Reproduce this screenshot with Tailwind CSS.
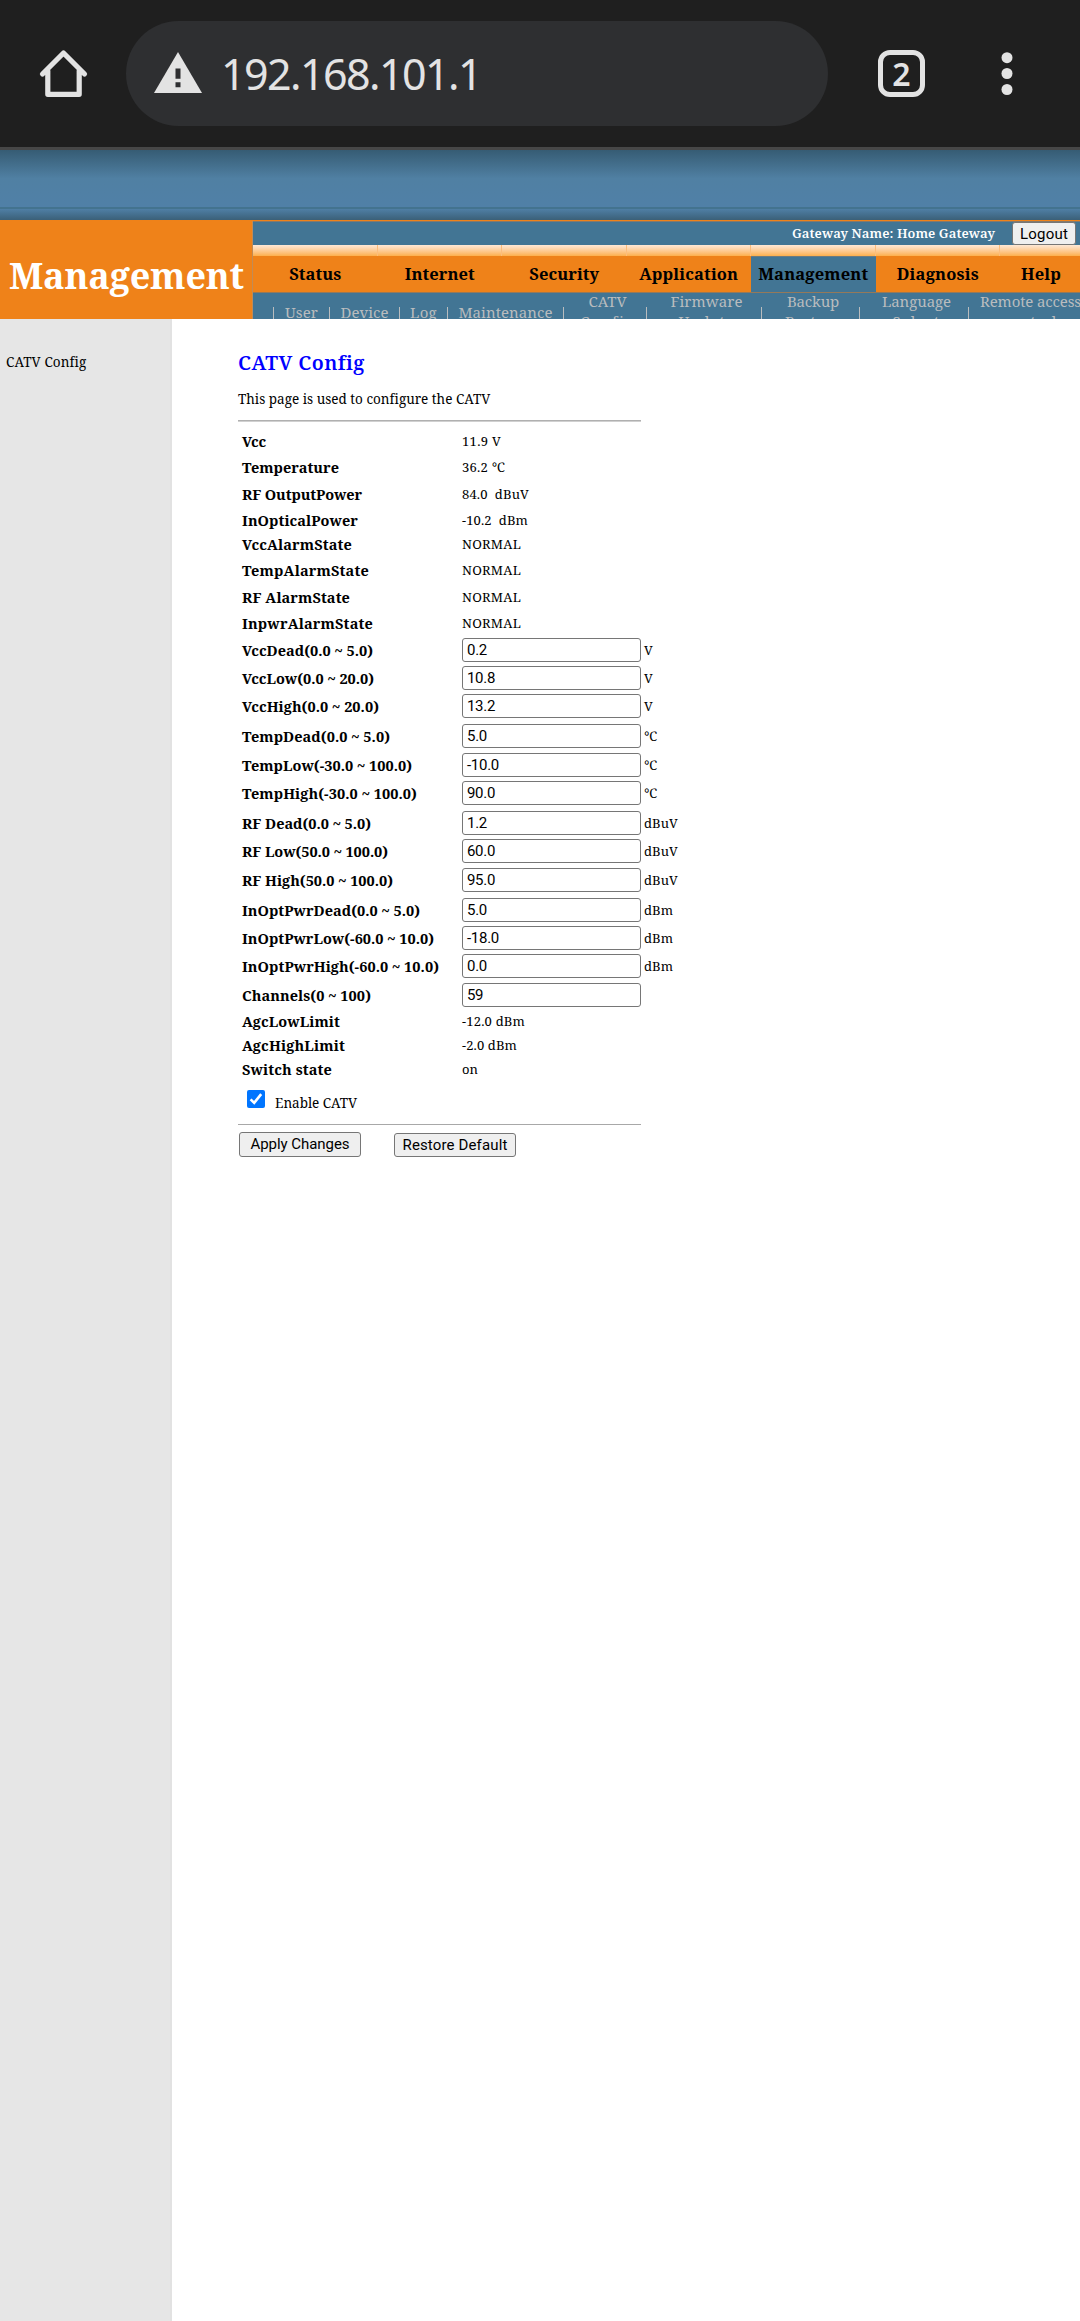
<!DOCTYPE html>
<html lang="en">
<head>
<meta charset="utf-8">
<title>CATV Config</title>
<script src="https://cdn.jsdelivr.net/npm/@tailwindcss/browser@4"></script>
</head>
<body class="w-[1080px] h-[2321px] overflow-hidden bg-white text-black font-['Noto_Serif','DejaVu_Serif',serif]">
<header class="flex h-[150px] items-start border-b-[3px] border-[#474747] bg-[#1f1f1f] text-[#e3e3e3]">
  <svg class="ml-[38px] mt-12 h-[52px] w-[52px] shrink-0" viewBox="0 0 52 52" fill="none" stroke="#e3e3e3" stroke-width="5.2" stroke-linecap="round" stroke-linejoin="round"><path d="M4.5 26 L25.5 5 L46.5 26 M9.800 23 V46.300 H41.200 V23"/></svg>
  <div class="ml-9 mt-[21px] flex h-[105px] w-[702px] items-center rounded-full bg-[#2e2f31]">
    <svg class="ml-7 mb-[3px] h-[41px] w-12 shrink-0" viewBox="0 0 48 42" preserveAspectRatio="none"><path fill="#e3e3e3" d="M24 0 L48 42 H0Z"/><path fill="#2e2f31" d="M21.500 17h5v10.500h-5z M21.500 31h5v5h-5z"/></svg>
    <div class="ml-[19px] whitespace-nowrap font-['Noto_Sans',sans-serif] text-[43px] leading-none"><span data-w="260" data-f="43px 'Noto Sans'">192.168.101.1</span></div>
  </div>
  <div class="ml-[50px] mt-[50px] flex h-[47px] w-[47px] items-center justify-center rounded-[12px] border-[5px] border-[#e3e3e3] font-['Noto_Sans',sans-serif] text-[32px] font-semibold leading-none">2</div>
  <svg class="ml-[75.5px] mt-[50px] h-12 w-3" viewBox="0 0 12 48" fill="#e3e3e3"><circle cx="6" cy="7.700" r="5.500"/><circle cx="6" cy="23.500" r="5.500"/><circle cx="6" cy="39.500" r="5.500"/></svg>
</header>
<div class="h-[57px] bg-linear-to-b from-[#365c74] via-[#5080a3] via-50% to-[#5080a7]"></div>
<div class="h-[13px] border-t-2 border-[#43738f] bg-linear-to-b from-[#4f7fa5] to-[#3b6078]"></div>
<div class="flex h-[99px] border-t border-[#ef8219] bg-[#427594]">
  <div class="w-[253px] shrink-0 border-r border-[#c18b55] bg-[#ef8219] pl-[9px] pt-[33px] text-[36px] font-bold leading-[44px] text-white"><span data-w="235" data-f="bold 36px 'Noto Serif'">Management</span></div>
  <div class="flex h-full w-[827px] flex-col overflow-hidden">
    <div class="flex h-6 shrink-0 border-t border-[#86796a] pl-[539px] text-[13px] font-semibold leading-[22px] text-white">
      <span data-w="203" data-f="600 13px 'Noto Serif'">Gateway Name: Home Gateway</span>
      <button class="ml-[17px] h-[23px] w-16 rounded-[3px] border border-[#767676] bg-[#efefef] font-[Roboto] text-[15px] font-normal leading-[20px] text-black"><span data-w="48" data-f="15px Roboto">Logout</span></button>
    </div>
    <nav id="tabs" class="flex h-12 w-[872px] shrink-0 text-[16.5px] font-bold"></nav>
    <div id="sub" class="flex w-[900px] text-[15px] leading-[20px] text-[#b9bcbe]"></div>
  </div>
</div>
<main class="flex h-[2002px]">
  <aside class="w-[172px] shrink-0 border-r-2 border-[#e2e2e2] bg-[#e6e6e6] pl-[6px] pt-[34px] text-[13.5px] leading-[18px]"><span data-w="80" data-f="13.5px 'Noto Serif'">CATV Config</span></aside>
  <section class="ml-[66px] w-[500px]">
    <h1 class="pt-[30px] text-[20px] font-semibold leading-[28px] text-[#0000ff]"><span data-w="126" data-f="600 20px 'Noto Serif'">CATV Config</span></h1>
    <p class="mt-[13px] text-[13.5px] leading-[18px]"><span data-w="252" data-f="13.5px 'Noto Serif'">This page is used to configure the CATV</span></p>
    <div class="mt-[12px] h-[2px] w-[403px] border-t border-[#b0b0b0] bg-[#d0d0d0]"></div>
    <div id="rows" class="mt-[7px]"></div>
    <div class="mt-[9px] flex">
      <div class="ml-[9px] flex h-[18px] w-[18px] items-center justify-center rounded-[2px] bg-[#0075ff]"><svg class="h-[18px] w-[18px]" viewBox="0 0 18 18" fill="none" stroke="#fff" stroke-width="2.600"><path d="M3.600 9.300 L7.200 12.900 L14.200 4.100"/></svg></div>
      <div class="ml-[10px] mt-1 text-[13.5px] leading-[18px]"><span data-w="82" data-f="13.5px 'Noto Serif'">Enable CATV</span></div>
    </div>
    <div class="mt-[12px] h-px w-[403px] bg-[#a8a8a8]"></div>
    <div class="ml-px mt-[7px] flex items-end gap-[33px] font-[Roboto] text-[15px] leading-none">
      <button class="h-[25px] w-[122px] rounded-[3px] border border-[#767676] bg-[#efefef]"><span data-w="99" data-f="15px Roboto">Apply Changes</span></button>
      <button class="h-6 w-[122px] rounded-[3px] border border-[#767676] bg-[#efefef]"><span data-w="105" data-f="15px Roboto">Restore Default</span></button>
    </div>
  </section>
</main>
<script>
const tabs = [["Status",52],["Internet",70],["Security",70],["Application",99],["Management",110],["Diagnosis",82],["Help",40]];
document.getElementById("tabs").innerHTML = tabs.map(([t,w],i)=>`<div class="flex h-12 w-[124.5px] shrink-0 flex-col"><div class="h-[11px] border-r border-[#fcbd7c] bg-linear-to-b from-[#fde8d6] to-[#fdb04a]"></div><div class="h-[37px] border-b border-[#94795a] ${i===6?"pl-[21px]":"text-center"} ${i===4?"bg-[#427594] border-t border-t-[#6c7a80] leading-[34px]":"bg-[#ef8219] leading-[36px]"}"><span data-w="${w}" data-f="bold 16.5px 'Noto Serif'">${t}</span></div></div>`).join("");
const subs = [["User",33,56],["Device",48,70],["Log",27,48],["Maintenance",94,116],["CATV",38,83,"Config",54],["Firmware",72,115,"Update",56],["Backup",52,98,"Restore",56],["Language",69,109,"Select",48],["Remote access",101,124,"control",52]];
document.getElementById("sub").innerHTML = `<div class="w-[20px] shrink-0"></div>` + subs.map(([t,w,cw,t2,w2],i)=>`<div class="flex shrink-0" style="width:${cw}px"><div class="mt-[14px] h-6 w-px bg-[#b9bcbe]"></div><div class="flex-1 text-center whitespace-nowrap ${t2?"-mt-0.5":"pt-[9px]"} ${t2&&i<8?"pl-[5px]":""}"><span data-w="${w}" data-f="15px 'Noto Serif'">${t}</span>${t2?`<br><span data-w="${w2}" data-f="15px 'Noto Serif'">${t2}</span>`:""}</div></div>`).join("");
const N=59;
const rows = [
["Vcc",24,26,"11.9 V",39],["Temperature",97,27,"36.2 ℃",43],["RF OutputPower",120,26,"84.0\u00a0 dBuV",67],["InOpticalPower",116,24,"-10.2\u00a0 dBm",66],
["VccAlarmState",110,26,"NORMAL",N],["TempAlarmState",127,27,"NORMAL",N],["RF AlarmState",108,26,"NORMAL",N],["InpwrAlarmState",131,27,"NORMAL",N],
["VccDead(0.0 ~ 5.0)",131,28,"0.2",20,"V",8],["VccLow(0.0 ~ 20.0)",132,28,"10.8",28,"V",8],["VccHigh(0.0 ~ 20.0)",137,30,"13.2",28,"V",8],
["TempDead(0.0 ~ 5.0)",148,29,"5.0",20,"℃",12],["TempLow(-30.0 ~ 100.0)",170,28,"-10.0",32,"℃",12],["TempHigh(-30.0 ~ 100.0)",175,30,"90.0",28,"℃",12],
["RF Dead(0.0 ~ 5.0)",129,28,"1.2",20,"dBuV",34],["RF Low(50.0 ~ 100.0)",146,29,"60.0",28,"dBuV",34],["RF High(50.0 ~ 100.0)",151,30,"95.0",28,"dBuV",34],
["InOptPwrDead(0.0 ~ 5.0)",178,28,"5.0",20,"dBm",29],["InOptPwrLow(-60.0 ~ 10.0)",192,28,"-18.0",32,"dBm",29],["InOptPwrHigh(-60.0 ~ 10.0)",197,29,"0.0",20,"dBm",29],
["Channels(0 ~ 100)",129,26,"59",16,"",0],["AgcLowLimit",98,24,"-12.0 dBm",63],["AgcHighLimit",103,24,"-2.0 dBm",55],["Switch state",90,24,"on",16]];
document.getElementById("rows").innerHTML = rows.map(([l,lw,h,v,vw,u,uw])=>`<div class="flex items-start whitespace-nowrap" style="height:${h}px"><div class="w-[221px] shrink-0 pl-[4px] pt-px text-[14.5px] font-bold leading-[22px]"><span data-w="${lw}" data-f="bold 14.5px 'Noto Serif'">${l}</span></div>`+
(u===undefined?`<div class="pl-[3px] pt-px text-[13px] leading-[22px]"><span data-w="${vw}" data-f="13px 'Noto Serif'">${v}</span></div>`
:`<div class="ml-[3px] h-6 w-[179px] shrink-0 rounded-[3px] border border-[#767676] pl-[4px] font-[Roboto] text-[15px] leading-[22px]"><span data-w="${vw}" data-f="15px Roboto">${v}</span></div><div class="pl-[3px] pt-px text-[13px] leading-[22px]"><span data-w="${uw}" data-f="13px 'Noto Serif'">${u}</span></div>`)+`</div>`).join("");
const ctx=document.createElement("canvas").getContext("2d");
document.querySelectorAll("[data-w]").forEach(e=>{
  const t=e.textContent, n=[...t].length;
  if(n<2) return;
  ctx.font=e.dataset.f;
  e.style.letterSpacing=((+e.dataset.w-ctx.measureText(t).width)/n).toFixed(3)+"px";
});
</script>
</body>
</html>
